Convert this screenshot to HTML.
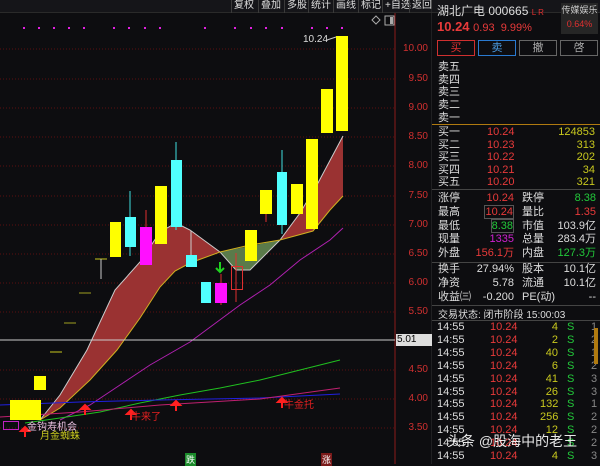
<!DOCTYPE html><html><head><meta charset="utf-8"><style>
*{margin:0;padding:0;box-sizing:border-box}
body{width:600px;height:464px;background:#0d0d10;overflow:hidden;position:relative;font-family:"Liberation Sans","Noto Sans CJK SC",sans-serif;color:#ccc}
.a{position:absolute;white-space:nowrap}
.tb{position:absolute;top:0;height:13px;font-size:10px;color:#ddd;line-height:12px;border-left:1px solid #3a3a3a;padding-left:2px}
.r{color:#e83a3a}.g{color:#22c83a}.y{color:#c8c81e}.w{color:#ddd}.m{color:#d020d0}
.p{font-size:11px;line-height:12px}
.pl{position:absolute;left:396px;width:32px;text-align:right;font-size:10px;color:#d03030}
</style></head><body>
<div class="a" style="left:0;top:0;width:600px;height:13px;background:#151519;border-bottom:1px solid #2a2a2a"></div>
<div class="tb" style="left:231px">复权</div><div class="tb" style="left:258px">叠加</div><div class="tb" style="left:284px">多股</div><div class="tb" style="left:308px">统计</div><div class="tb" style="left:333px">画线</div><div class="tb" style="left:358px">标记</div><div class="tb" style="left:382px">+自选</div><div class="tb" style="left:409px">返回</div>
<svg class="a" style="left:0;top:0" width="432" height="464">
<g stroke="#5a1010" stroke-dasharray="1,2">
<line x1="0" y1="49" x2="395" y2="49"/><line x1="0" y1="79" x2="395" y2="79"/><line x1="0" y1="108" x2="395" y2="108"/><line x1="0" y1="137" x2="395" y2="137"/><line x1="0" y1="166" x2="395" y2="166"/><line x1="0" y1="196" x2="395" y2="196"/><line x1="0" y1="225" x2="395" y2="225"/><line x1="0" y1="254" x2="395" y2="254"/><line x1="0" y1="283" x2="395" y2="283"/><line x1="0" y1="312" x2="395" y2="312"/><line x1="0" y1="370" x2="395" y2="370"/><line x1="0" y1="399" x2="395" y2="399"/><line x1="0" y1="428" x2="395" y2="428"/></g>
<line x1="395" y1="13" x2="395" y2="464" stroke="#8a1a1a"/>
<line x1="432" y1="0" x2="432" y2="464" stroke="#333"/>
<g fill="#e020e0"><rect x="23" y="27" width="2" height="2"/><rect x="38" y="27" width="2" height="2"/><rect x="53" y="27" width="2" height="2"/><rect x="68" y="27" width="2" height="2"/><rect x="83" y="27" width="2" height="2"/><rect x="113" y="27" width="2" height="2"/><rect x="128" y="27" width="2" height="2"/><rect x="144" y="27" width="2" height="2"/><rect x="159" y="27" width="2" height="2"/><rect x="204" y="27" width="2" height="2"/><rect x="234" y="27" width="2" height="2"/><rect x="250" y="27" width="2" height="2"/><rect x="265" y="27" width="2" height="2"/><rect x="281" y="27" width="2" height="2"/><rect x="311" y="27" width="2" height="2"/><rect x="326" y="27" width="2" height="2"/><rect x="341" y="27" width="2" height="2"/></g>
<path d="M376 16l4 4-4 4-4-4z" fill="none" stroke="#aaa"/><rect x="385" y="16" width="9" height="9" fill="none" stroke="#aaa"/><rect x="390" y="17" width="3" height="7" fill="#aaa"/>
<path d="M40 420L60 395L87 350L115 290L140 262L160 232L176 223L190 230L220 252L280 240L313 231L330 210L343 196L343 136L318 183L300 213L280 240L220 252L190 263L175 271L160 287L140 318L117 350L90 380L60 408Z" fill="#9a3232"/>
<path d="M220 252L236 270L250 270L280 240Z" fill="#5a7a4a"/>
<path d="M40 420L60 395L87 350L115 290L140 262L160 232L176 223L190 230L220 252L236 270L250 270L280 240L300 213L318 183L343 136" fill="none" stroke="#ccc" stroke-width="1"/>
<path d="M40 420L60 408L90 380L117 350L140 318L160 287L175 271L190 263L220 252L250 245L280 240L313 231L330 210L343 196" fill="none" stroke="#d0b020" stroke-width="1"/>
<path d="M60 420L90 405L120 385L150 365L190 342L240 305L270 285L300 260L330 240L343 228" fill="none" stroke="#b020b0"/>
<path d="M25 423L60 418L100 412L140 403L180 395L220 388L260 380L300 370L340 360" fill="none" stroke="#20c020"/>
<path d="M0 405L80 402L160 400L260 398L340 394" fill="none" stroke="#2020e0"/>
<path d="M0 417L80 412L160 405L260 399L340 388" fill="none" stroke="#c02070"/>
<line x1="0" y1="340" x2="395" y2="340" stroke="#ccc"/>
<g stroke-width="1">
<line x1="50" y1="352" x2="62" y2="352" stroke="#c8c81e"/><line x1="64" y1="323" x2="76" y2="323" stroke="#a0a020"/><line x1="79" y1="293" x2="91" y2="293" stroke="#a0a020"/>
<line x1="95" y1="259" x2="107" y2="259" stroke="#c8c81e"/><line x1="101" y1="259" x2="101" y2="279" stroke="#ccc"/>
<line x1="130" y1="191" x2="130" y2="256" stroke="#40e0e0"/><line x1="146" y1="210" x2="146" y2="265" stroke="#e03030"/><line x1="176" y1="142" x2="176" y2="230" stroke="#40e0e0"/><line x1="191" y1="231" x2="191" y2="260" stroke="#ccc"/><line x1="221" y1="274" x2="221" y2="305" stroke="#e03030"/><line x1="236" y1="253" x2="236" y2="302" stroke="#e03030"/><line x1="282" y1="150" x2="282" y2="234" stroke="#40e0e0"/><line x1="266" y1="214" x2="266" y2="222" stroke="#e03030"/></g>
<g fill="#ffff00"><rect x="10" y="400" width="31" height="20"/><rect x="34" y="376" width="12" height="14"/><rect x="110" y="222" width="11" height="35"/><rect x="155" y="186" width="12" height="58"/><rect x="245" y="230" width="12" height="31"/><rect x="260" y="190" width="12" height="24"/><rect x="291" y="184" width="12" height="30"/><rect x="306" y="139" width="12" height="90"/><rect x="321" y="89" width="12" height="44"/><rect x="336" y="36" width="12" height="95"/></g>
<g fill="#50ffff"><rect x="125" y="217" width="11" height="30"/><rect x="171" y="160" width="11" height="67"/><rect x="186" y="255" width="11" height="12"/><rect x="201" y="282" width="10" height="21"/><rect x="277" y="172" width="10" height="53"/></g>
<g fill="#ff10ff"><rect x="140" y="227" width="12" height="38"/><rect x="215" y="283" width="12" height="20"/></g>
<rect x="231.5" y="266.5" width="11" height="23" fill="none" stroke="#e03030"/>
<rect x="3.5" y="421.5" width="15" height="8" fill="none" stroke="#c020c0"/>
<path d="M220 262v10M216 268l4 4 4-4" stroke="#20d020" stroke-width="2" fill="none"/>
<g stroke="#ff2020" stroke-width="2" fill="#ff2020"><path d="M25 437v-8"/><path d="M21 431l4-4 4 4z"/><path d="M85 415v-8"/><path d="M81 409l4-4 4 4z"/><path d="M131 420v-8"/><path d="M127 414l4-4 4 4z"/><path d="M176 411v-8"/><path d="M172 405l4-4 4 4z"/><path d="M282 408v-8"/><path d="M278 402l4-4 4 4z"/></g>
<line x1="327" y1="40" x2="336" y2="37" stroke="#ccc"/>
</svg>
<div class="a" style="left:303px;top:34px;font-size:10px;color:#ddd">10.24</div>
<div class="a" style="left:131px;top:408px;font-size:10px;color:#e02020">牛来了</div>
<div class="a" style="left:284px;top:396px;font-size:10px;color:#e02020">牛金托</div>
<div class="a" style="left:27px;top:418px;font-size:10px;color:#e8c0e0">金钩寿机会</div>
<div class="a" style="left:40px;top:427px;font-size:10px;color:#c8c81e">月金蜘蛛</div>
<div class="a" style="left:185px;top:453px;font-size:9px;color:#fff;background:#1a8a2a;padding:0 1px">跌</div>
<div class="a" style="left:321px;top:453px;font-size:9px;color:#fff;background:#7a1a1a;padding:0 1px">涨</div>
<div class="pl" style="top:43px">10.00</div>
<div class="pl" style="top:73px">9.50</div>
<div class="pl" style="top:102px">9.00</div>
<div class="pl" style="top:131px">8.50</div>
<div class="pl" style="top:160px">8.00</div>
<div class="pl" style="top:190px">7.50</div>
<div class="pl" style="top:219px">7.00</div>
<div class="pl" style="top:248px">6.50</div>
<div class="pl" style="top:277px">6.00</div>
<div class="pl" style="top:306px">5.50</div>
<div class="a" style="left:396px;top:334px;width:36px;height:12px;background:#ddd;color:#000;font-size:10px;padding-left:1px">5.01</div>
<div class="pl" style="top:364px">4.50</div>
<div class="pl" style="top:393px">4.00</div>
<div class="pl" style="top:422px">3.50</div>
<div class="a" style="left:437px;top:2px;font-size:12px;color:#ddd">湖北广电 000665 <span style="font-size:8px;color:#e03030">L R</span></div>
<div class="a" style="left:561px;top:3px;width:37px;height:31px;background:#262626;font-size:9px;text-align:center;line-height:14px;color:#ccc">传媒娱乐<br><span style="color:#e03030">0.64%</span></div>
<div class="a" style="left:437px;top:19px;font-size:13px;color:#e83a3a"><b>10.24</b> <span style="font-size:11px">0.93 &nbsp;9.99%</span></div>
<div class="a" style="left:437px;top:40px;width:38px;height:16px;border:1px solid #d03030;color:#e03030;font-size:11px;text-align:center;line-height:14px">买</div>
<div class="a" style="left:478px;top:40px;width:38px;height:16px;border:1px solid #2a7ad0;color:#4a9ae0;font-size:11px;text-align:center;line-height:14px">卖</div>
<div class="a" style="left:519px;top:40px;width:38px;height:16px;border:1px solid #666;color:#aaa;font-size:11px;text-align:center;line-height:14px">撤</div>
<div class="a" style="left:560px;top:40px;width:38px;height:16px;border:1px solid #666;color:#aaa;font-size:11px;text-align:center;line-height:14px">啓</div>
<div class="a p w" style="left:438px;top:61px;line-height:12.7px">卖五<br>卖四<br>卖三<br>卖二<br>卖一</div>
<div class="a" style="left:432px;top:124px;width:168px;height:1px;background:#b07a10"></div>
<div class="a p w" style="left:438px;top:126px;line-height:12.5px">买一<br>买二<br>买三<br>买四<br>买五</div>
<div class="a p r" style="left:487px;top:126px;line-height:12.5px">10.24<br>10.23<br>10.22<br>10.21<br>10.20</div>
<div class="a p y" style="left:540px;top:126px;width:55px;text-align:right;line-height:12.5px">124853<br>313<br>202<br>34<br>321</div>
<div class="a" style="left:432px;top:189px;width:168px;height:1px;background:#444"></div>
<div class="a p w" style="left:438px;top:192px;line-height:13.8px">涨停<br>最高<br>最低<br>现量<br>外盘</div>
<div class="a p" style="left:470px;top:192px;width:44px;text-align:right;line-height:13.8px"><span class="r">10.24</span><br><span class="r" style="border:1px solid #555">10.24</span><br><span class="g" style="border:1px solid #555">8.38</span><br><span class="m">1335</span><br><span class="r">156.1万</span></div>
<div class="a p w" style="left:522px;top:192px;line-height:13.8px">跌停<br>量比<br>市值<br>总量<br>内盘</div>
<div class="a p" style="left:550px;top:192px;width:46px;text-align:right;line-height:13.8px"><span class="g">8.38</span><br><span class="r">1.35</span><br><span class="w">103.9亿</span><br><span class="w">283.4万</span><br><span class="g">127.3万</span></div>
<div class="a" style="left:432px;top:262px;width:168px;height:1px;background:#444"></div>
<div class="a p w" style="left:438px;top:263px;line-height:13.8px">换手<br>净资<br>收益㈢</div>
<div class="a p w" style="left:470px;top:263px;width:44px;text-align:right;line-height:13.8px">27.94%<br>5.78<br>-0.200</div>
<div class="a p w" style="left:522px;top:263px;line-height:13.8px">股本<br>流通<br>PE(动)</div>
<div class="a p w" style="left:550px;top:263px;width:46px;text-align:right;line-height:13.8px">10.1亿<br>10.1亿<br>--</div>
<div class="a" style="left:432px;top:305px;width:168px;height:1px;background:#444"></div>
<div class="a w" style="left:438px;top:306px;font-size:10px">交易状态: 闭市阶段 15:00:03</div>
<div class="a" style="left:432px;top:320px;width:168px;height:1px;background:#444"></div>
<div class="a p w" style="left:437px;top:321px;line-height:12.9px">14:55<br>14:55<br>14:55<br>14:55<br>14:55<br>14:55<br>14:55<br>14:55<br>14:55<br>14:55<br>14:55</div>
<div class="a p r" style="left:490px;top:321px;line-height:12.9px">10.24<br>10.24<br>10.24<br>10.24<br>10.24<br>10.24<br>10.24<br>10.24<br>10.24<br>10.24<br>10.24</div>
<div class="a p y" style="left:540px;top:321px;width:18px;text-align:right;line-height:12.9px">4<br>2<br>40<br>6<br>41<br>26<br>132<br>256<br>12<br>&nbsp;<br>4</div>
<div class="a p g" style="left:567px;top:321px;line-height:12.9px">S<br>S<br>S<br>S<br>S<br>S<br>S<br>S<br>S<br>S<br>S</div>
<div class="a p" style="left:591px;top:321px;line-height:12.9px;color:#888">1<br>2<br>1<br>2<br>3<br>3<br>1<br>2<br>2<br>2<br>3</div>
<div class="a" style="left:594px;top:328px;width:4px;height:36px;background:#b07a10"></div>
<div class="a" style="left:447px;top:431px;font-size:14px;color:rgba(255,255,255,0.9)">头条 @股海中的老王</div>
</body></html>
